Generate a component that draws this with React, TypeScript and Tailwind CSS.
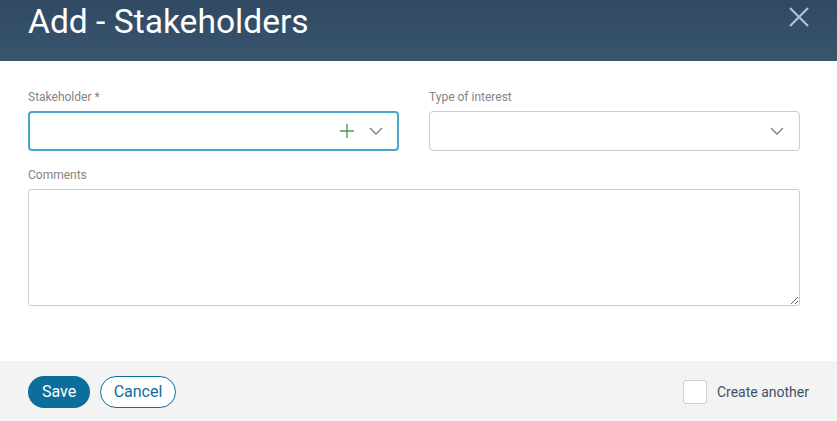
import React, { useState } from "react";

const font = { fontFamily: "Roboto, 'Noto Sans', sans-serif" };

const Chevron = ({ className }: { className?: string }) => (
  <svg width="14" height="8" viewBox="0 0 14 8" className={className}>
    <path d="M1 1l6 6 6-6" fill="none" stroke="currentColor" strokeWidth="1.3" />
  </svg>
);

const App = () => {
  const [another, setAnother] = useState(false);

  return (
    <div className="w-[837px] h-[421px] flex flex-col bg-white overflow-hidden" style={font}>
      <div className="h-[61px] shrink-0 flex items-start justify-between bg-gradient-to-b from-[#2f4a62] to-[#39556d] pl-[28px] pr-[27px]">
        <h1 className="text-[33.6px] leading-[34px] pt-[5px] text-white font-normal">
          Add - Stakeholders
        </h1>
        <button type="button" className="mt-[6px] text-[#b5c1cc]">
          <svg width="22" height="22" viewBox="0 0 22 22">
            <path d="M2 2l18 18M20 2L2 20" stroke="currentColor" strokeWidth="2.2" />
          </svg>
        </button>
      </div>

      <div className="flex-1 px-[28px] pt-[29px]">
        <div className="grid grid-cols-[371px_371px] gap-x-[30px]">
          <div>
            <label className="block text-[12px] leading-[14px] text-[#858585] mb-[7px]">Stakeholder *</label>
            <div className="h-[40px] border-2 border-[#4ba6cd] rounded-[4px] flex items-center justify-end pr-[14px] gap-[15px]">
              <svg width="14" height="14" viewBox="0 0 14 14" className="text-[#4d9a52]">
                <path d="M7 0v14M0 7h14" stroke="currentColor" strokeWidth="1.4" />
              </svg>
              <Chevron className="text-[#7d7d7d]" />
            </div>
          </div>
          <div>
            <label className="block text-[12px] leading-[14px] text-[#858585] mb-[7px]">Type of interest</label>
            <div className="h-[40px] border border-[#cccccc] rounded-[4px] flex items-center justify-end pr-[15px]">
              <Chevron className="text-[#7d7d7d]" />
            </div>
          </div>
        </div>

        <label className="block text-[12px] leading-[14px] text-[#858585] mt-[17px] mb-[7px]">Comments</label>
        <textarea className="block w-[772px] h-[117px] border border-[#cccccc] rounded-[3px] resize-y outline-none" />
      </div>

      <div className="h-[60px] shrink-0 bg-[#f3f3f3] flex items-center justify-between pl-[28px] pr-[28px] pt-[2px]">
        <div className="flex items-center gap-[10px]">
          <button type="button" className="h-[32px] w-[62px] rounded-full bg-[#0c6f9b] text-white text-[16px]">
            Save
          </button>
          <button type="button" className="h-[32px] w-[76px] rounded-full bg-white border border-[#0c6f9b] text-[#0c6f9b] text-[16px]">
            Cancel
          </button>
        </div>
        <label className="flex items-center gap-[10px] cursor-pointer">
          <input
            type="checkbox"
            checked={another}
            onChange={(e) => setAnother(e.target.checked)}
            className="appearance-none w-[24px] h-[24px] bg-white border border-[#cfcfcf] rounded-[3px] checked:bg-[#0c6f9b]"
          />
          <span className="text-[14px] text-[#3d5166]">Create another</span>
        </label>
      </div>
    </div>
  );
};

export default App;
